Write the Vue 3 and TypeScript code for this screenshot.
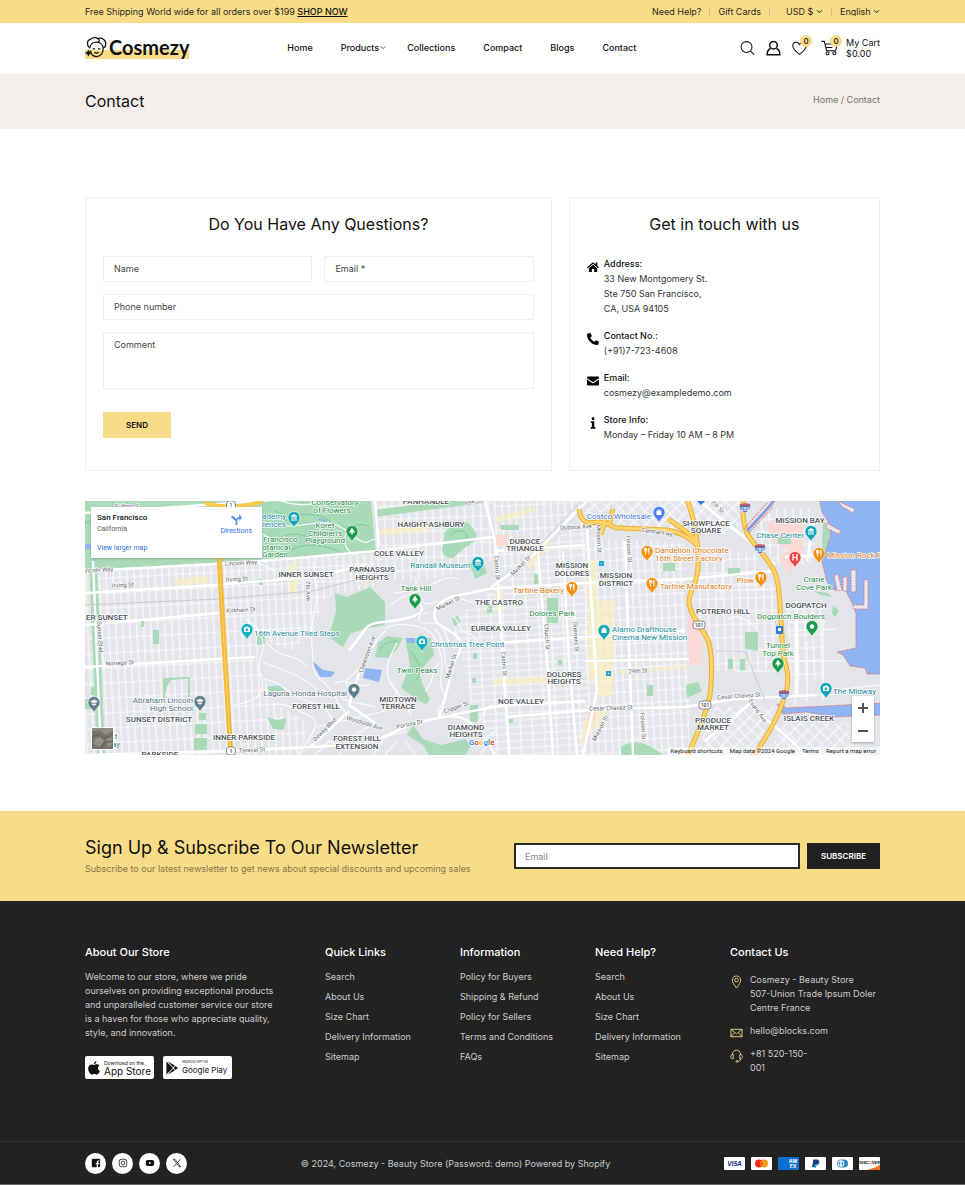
<script setup lang="ts">
import { ref } from 'vue'

interface MapLabel {
  t: string
  x: number
  y: number
  a?: 'start' | 'middle' | 'end'
  r?: number
}
interface MapPin {
  x: number
  y: number
  c: string
  g: 'camera' | 'tree' | 'food' | 'school' | 'bag' | 'h' | 'dot' | 'museum'
}

const navLinks = [
  { name: 'Home', menu: false },
  { name: 'Products', menu: true },
  { name: 'Collections', menu: false },
  { name: 'Compact', menu: false },
  { name: 'Blogs', menu: false },
  { name: 'Contact', menu: false },
]

const contactBlocks = [
  { icon: 'home', title: 'Address:', lines: ['33 New Montgomery St.', 'Ste 750 San Francisco,', 'CA, USA 94105'] },
  { icon: 'phone', title: 'Contact No.:', lines: ['(+91)7-723-4608'] },
  { icon: 'mail', title: 'Email:', lines: ['cosmezy@exampledemo.com'] },
  { icon: 'info', title: 'Store Info:', lines: ['Monday – Friday 10 AM – 8 PM'] },
]

const footerColumns = [
  { title: 'Quick Links', links: ['Search', 'About Us', 'Size Chart', 'Delivery Information', 'Sitemap'] },
  { title: 'Information', links: ['Policy for Buyers', 'Shipping & Refund', 'Policy for Sellers', 'Terms and Conditions', 'FAQs'] },
  { title: 'Need Help?', links: ['Search', 'About Us', 'Size Chart', 'Delivery Information', 'Sitemap'] },
]

const districts: MapLabel[] = [
  { t: 'INNER SUNSET', x: 221, y: 76 },
  { t: 'ER SUNSET', x: 1, y: 119, a: 'start' },
  { t: 'SUNSET DISTRICT', x: 74, y: 221 },
  { t: 'INNER PARKSIDE', x: 159, y: 239 },
  { t: 'PARKSIDE', x: 75, y: 256 },
  { t: 'FOREST HILL', x: 231, y: 208 },
  { t: 'PANHANDLE', x: 341, y: 3 },
  { t: 'HAIGHT-ASHBURY', x: 346, y: 26 },
  { t: 'COLE VALLEY', x: 314, y: 55 },
  { t: 'PARNASSUS', x: 287, y: 71 },
  { t: 'HEIGHTS', x: 287, y: 79 },
  { t: 'DUBOCE', x: 440, y: 43 },
  { t: 'TRIANGLE', x: 440, y: 50 },
  { t: 'MISSION', x: 487, y: 67 },
  { t: 'DOLORES', x: 487, y: 75 },
  { t: 'MISSION', x: 531, y: 77 },
  { t: 'DISTRICT', x: 531, y: 85 },
  { t: 'THE CASTRO', x: 414, y: 104 },
  { t: 'EUREKA VALLEY', x: 416, y: 130 },
  { t: 'DOLORES', x: 479, y: 176 },
  { t: 'HEIGHTS', x: 479, y: 183 },
  { t: 'NOE VALLEY', x: 436, y: 203 },
  { t: 'MIDTOWN', x: 313, y: 201 },
  { t: 'TERRACE', x: 313, y: 208 },
  { t: 'FOREST HILL', x: 272, y: 240 },
  { t: 'EXTENSION', x: 272, y: 248 },
  { t: 'DIAMOND', x: 381, y: 229 },
  { t: 'HEIGHTS', x: 381, y: 236 },
  { t: 'SHOWPLACE', x: 621, y: 25 },
  { t: 'SQUARE', x: 621, y: 32 },
  { t: 'MISSION BAY', x: 715, y: 22 },
  { t: 'POTRERO HILL', x: 638, y: 113 },
  { t: 'DOGPATCH', x: 721, y: 107 },
  { t: 'PRODUCE', x: 628, y: 222 },
  { t: 'MARKET', x: 628, y: 229 },
  { t: 'ISLAIS CREEK', x: 724, y: 220 },
]

const teal: MapLabel[] = [
  { t: 'ademy', x: 201, y: 18, a: 'end' },
  { t: 'ciences', x: 201, y: 26, a: 'end' },
  { t: '16th Avenue Tiled Steps', x: 169, y: 135, a: 'start' },
  { t: 'Randall Museum', x: 385, y: 67, a: 'end' },
  { t: 'Christmas Tree Point', x: 345, y: 146, a: 'start' },
  { t: 'Alamo Drafthouse', x: 527, y: 131, a: 'start' },
  { t: 'Cinema New Mission', x: 527, y: 139, a: 'start' },
  { t: 'Chase Center', x: 719, y: 37, a: 'end' },
  { t: 'The Midway', x: 748, y: 193, a: 'start' },
]
const green: MapLabel[] = [
  { t: 'Francisco', x: 178, y: 41, a: 'start' },
  { t: 'otanical', x: 177, y: 49, a: 'start' },
  { t: 'Garden', x: 177, y: 56, a: 'start' },
  { t: 'Conservatory', x: 250, y: 4 },
  { t: 'of Flowers', x: 247, y: 12 },
  { t: 'Koret', x: 240, y: 27 },
  { t: "Children's", x: 240, y: 35 },
  { t: 'Playground', x: 240, y: 42 },
  { t: 'Tank Hill', x: 331, y: 90 },
  { t: 'Dolores Park', x: 467, y: 115 },
  { t: 'Twin Peaks', x: 332, y: 172 },
  { t: 'Crane', x: 729, y: 81 },
  { t: 'Cove Park', x: 729, y: 89 },
  { t: 'Dogpatch Boulders', x: 706, y: 118 },
  { t: 'Tunnel', x: 693, y: 147 },
  { t: 'Top Park', x: 693, y: 155 },
  { t: 't', x: 31, y: 238 },
  { t: 'ay', x: 31, y: 246 },
]
const orange: MapLabel[] = [
  { t: 'Tartine Bakery', x: 479, y: 92, a: 'end' },
  { t: 'Dandelion Chocolate', x: 570, y: 52, a: 'start' },
  { t: '16th Street Factory', x: 570, y: 60, a: 'start' },
  { t: 'Tartine Manufactory', x: 575, y: 88, a: 'start' },
  { t: 'Plow', x: 669, y: 82, a: 'end' },
  { t: 'Mission Rock R', x: 742, y: 57, a: 'start' },
]
const slate: MapLabel[] = [
  { t: 'Abraham Lincoln', x: 108, y: 202, a: 'end' },
  { t: 'High School', x: 108, y: 210, a: 'end' },
  { t: 'Laguna Honda Hospital', x: 262, y: 195, a: 'end' },
]
const blue: MapLabel[] = [{ t: 'Costco Wholesale', x: 566, y: 18, a: 'end' }]

const placeGroups = [
  { kind: 'district', items: districts },
  { kind: 'teal', items: teal },
  { kind: 'green', items: green },
  { kind: 'orange', items: orange },
  { kind: 'slate', items: slate },
  { kind: 'blue', items: blue },
]

const streets: MapLabel[] = [
  { t: 'Fulton St', x: 42, y: 7, r: -3 },
  { t: 'Irving St', x: 38, y: 86, r: -3 },
  { t: 'Irving St', x: 152, y: 80, r: -3 },
  { t: 'Lincoln Way', x: 156, y: 64, r: -3 },
  { t: 'incoln Way', x: 14, y: 71, r: -3 },
  { t: 'Kirkham St', x: 156, y: 111, r: -3 },
  { t: 'Noriega St', x: 35, y: 164, r: -3 },
  { t: 'Taraval St', x: 167, y: 251, r: -3 },
  { t: 'Sunset Blvd', x: 13, y: 136, r: 87 },
  { t: '7th Ave', x: 221, y: 90, r: 87 },
  { t: 'Dewey Blvd', x: 241, y: 230, r: -45 },
  { t: 'Oak St', x: 388, y: 2, r: -6 },
  { t: 'Duboce Ave', x: 491, y: 28, r: -3 },
  { t: 'Mission St', x: 512, y: 38, r: 88 },
  { t: 'Castro St', x: 410, y: 67, r: 86 },
  { t: 'Castro St', x: 417, y: 163, r: 86 },
  { t: 'Market St', x: 437, y: 66, r: -45 },
  { t: 'Market St', x: 364, y: 104, r: -27 },
  { t: 'Market St', x: 368, y: 166, r: -72 },
  { t: 'Church St', x: 460, y: 136, r: 87 },
  { t: 'Guerrero St', x: 489, y: 136, r: 87 },
  { t: 'Clarendon Ave', x: 284, y: 154, r: -70 },
  { t: 'Portola Dr', x: 325, y: 225, r: -12 },
  { t: 'Clipper St', x: 372, y: 208, r: -20 },
  { t: 'Woodside Ave', x: 279, y: 224, r: 17 },
  { t: 'Mission St', x: 517, y: 228, r: -62 },
  { t: 'Cesar Chavez St', x: 526, y: 209, r: -2 },
  { t: 'Cesar Chavez St', x: 654, y: 197, r: -4 },
  { t: 'Central Fwy', x: 572, y: 33, r: 8 },
  { t: '24th St', x: 553, y: 172, r: -3 },
  { t: 'Folsom St', x: 542, y: 48, r: 87 },
  { t: 'Folsom St', x: 556, y: 225, r: 87 },
  { t: 'Evans Ave', x: 671, y: 211, r: 55 },
  { t: '7th St', x: 631, y: 7, r: 45 },
]

const pins: MapPin[] = [
  { x: 209, y: 27, c: '#12a5b8', g: 'museum' },
  { x: 267, y: 41, c: '#1e9a4b', g: 'tree' },
  { x: 162, y: 139, c: '#12b1c6', g: 'camera' },
  { x: 115, y: 211, c: '#5f7d8c', g: 'school' },
  { x: 9, y: 212, c: '#5f7d8c', g: 'school' },
  { x: 393, y: 72, c: '#12a5b8', g: 'museum' },
  { x: 330, y: 109, c: '#1e9a4b', g: 'tree' },
  { x: 487, y: 97, c: '#f29111', g: 'food' },
  { x: 337, y: 151, c: '#12b1c6', g: 'camera' },
  { x: 519, y: 140, c: '#12a5b8', g: 'bag' },
  { x: 269, y: 199, c: '#5f7d8c', g: 'dot' },
  { x: 574, y: 22, c: '#4a80f0', g: 'bag' },
  { x: 562, y: 61, c: '#f29111', g: 'food' },
  { x: 567, y: 93, c: '#f29111', g: 'food' },
  { x: 676, y: 87, c: '#f29111', g: 'food' },
  { x: 726, y: 41, c: '#12a5b8', g: 'museum' },
  { x: 710, y: 67, c: '#ea4444', g: 'h' },
  { x: 734, y: 63, c: '#f29111', g: 'food' },
  { x: 727, y: 136, c: '#1e9a4b', g: 'dot' },
  { x: 693, y: 173, c: '#1e9a4b', g: 'tree' },
  { x: 741, y: 198, c: '#12a5b8', g: 'camera' },
]

const interstates = [
  { x: 660, y: 7 },
  { x: 675, y: 48 },
  { x: 699, y: 194 },
]
const routes = [
  { x: 614, y: 124, n: '101', w: 12 },
  { x: 620, y: 204, n: '101', w: 12 },
  { x: 146, y: 4, n: '1', w: 9 },
  { x: 146, y: 250, n: '1', w: 9 },
]

const hwy101 = 'M602 -2C606 10 610 22 611 31S615 60 612 74S604 92 604 101C605 114 616 126 622 137S627 180 625 194S611 236 602 256'
const hwy280 = 'M658 -2C657 12 659 24 662 32S680 54 687 66S694 90 696 120S697 150 701 165C706 182 700 195 696 206S680 240 667 256'
const hwy1 = 'M134 52L138 127L146 256'
const central = 'M494 8C495 18 500 24 512 21C524 20 526 28 536 27L582 29C594 31 603 35 612 44M583 18C592 24 602 30 612 40M520 14C519 20 520 27 515 33M528 8L524 24'

const name = ref('')
const email = ref('')
const phone = ref('')
const comment = ref('')
const subscriber = ref('')
</script>

<template>
  <div class="page">
    <div class="topbar wrap">
      <p>Free Shipping World wide for all orders over $199 <a href="#shop" class="shop">SHOP NOW</a></p>
      <div class="toplinks">
        <a href="#help">Need Help?</a>
        <a href="#gift">Gift Cards</a>
        <span class="picker currency">
          <select aria-label="Currency"><option>USD $</option></select>
          <svg viewBox="0 0 8 6"><path d="M1 1.5L4 4.5L7 1.5" /></svg>
        </span>
        <span class="picker">
          <select aria-label="Language"><option>English</option></select>
          <svg viewBox="0 0 8 6"><path d="M1 1.5L4 4.5L7 1.5" /></svg>
        </span>
      </div>
    </div>

    <header class="header wrap">
      <a href="#home" class="logo">
        <svg viewBox="0 0 24 24">
          <path d="M4.500 12C1.500 9.500 2 4.500 5.500 3.500C7.500 1.500 11.500 1 13.500 2.500C18 1.500 22.500 4.500 21.500 9C21.500 10.500 20.500 12 19 12.500" />
          <path d="M5 13C5 9 8 6.500 12 6.500S19 9 19 13.500S16 21.500 12 21.500S6 18 5.500 15M13.500 2.500C15.500 4 15 6 13.500 6.800" />
          <path d="M8 13.500H10.500M13.500 13.500H16M9.800 17C11 18.300 13 18.300 14.200 17" />
          <path class="flower" d="M3.500 14.500C4.200 16.500 4.800 17 6.800 17.700C4.800 18.400 4.200 19 3.500 21C2.800 19 2.200 18.400 .4 17.700C2.200 17 2.800 16.500 3.500 14.500Z" />
        </svg>
        <span>Cosmezy</span>
      </a>
      <nav class="nav">
        <a v-for="l in navLinks" :key="l.name" :href="'#' + l.name.toLowerCase()" :class="{ menu: l.menu }">
          {{ l.name }}<svg v-if="l.menu" viewBox="0 0 8 6"><path d="M1 1.500L4 4.500L7 1.500" /></svg>
        </a>
      </nav>
      <div class="tools">
        <button type="button" aria-label="Search">
          <svg viewBox="0 0 16 16"><circle cx="7" cy="7" r="5.800" /><path d="M11.300 11.300L15 15" /></svg>
        </button>
        <a href="#account" aria-label="Account">
          <svg viewBox="0 0 16 16" class="bold"><circle cx="8" cy="5" r="4" /><path d="M4.800 8.500C2.500 9.500 1.200 11.500 1.200 15.200H14.800C14.800 11.500 13.500 9.500 11.200 8.500" /></svg>
        </a>
        <a href="#wishlist" class="counted" aria-label="Wishlist">
          <svg viewBox="0 0 16 16"><path d="M8 14.800C4 11.800 .8 9 .8 5.600C.8 1.600 6 .4 8 4.200C10 .4 15.200 1.600 15.200 5.600C15.200 9 12 11.800 8 14.800Z" /></svg>
          <span class="count">0</span>
        </a>
        <a href="#cart" class="counted cart">
          <svg viewBox="0 0 18 16"><path d="M.5 1H3.500L6 11H15.500L17.200 4M4.300 3.800H12M5.200 7.500H12" /><circle cx="7" cy="13.600" r="1.600" /><circle cx="14.200" cy="13.600" r="1.600" /></svg>
          <span class="count">0</span>
          <span class="total">My Cart<br />$0.00</span>
        </a>
      </div>
    </header>

    <section class="banner wrap">
      <h1>Contact</h1>
      <p><a href="#home">Home</a> / Contact</p>
    </section>

    <main class="wrap">
      <div class="cards">
        <form class="card" @submit.prevent>
          <h2>Do You Have Any Questions?</h2>
          <div class="fields">
            <input v-model="name" type="text" placeholder="Name" aria-label="Name" />
            <input v-model="email" type="email" placeholder="Email *" aria-label="Email" />
            <input v-model="phone" class="wide" type="tel" placeholder="Phone number" aria-label="Phone number" />
            <textarea v-model="comment" class="wide" placeholder="Comment" aria-label="Comment"></textarea>
          </div>
          <button type="submit" class="send">SEND</button>
        </form>

        <section class="card">
          <h2>Get in touch with us</h2>
          <div v-for="b in contactBlocks" :key="b.icon" class="info">
            <svg viewBox="0 0 16 16">
              <g v-if="b.icon === 'home'"><path d="M8 1.500L0 8.300L1.200 9.500L8 3.800L14.800 9.500L16 8.300L13.800 6.400V2H11.600V4.500Z" /><path d="M8 5L2.500 9.600V14.500H6.500V10.500H9.500V14.500H13.500V9.600Z" /></g>
              <path v-else-if="b.icon === 'phone'" d="M1 .8L4.700 0L6.500 4.200L4.300 6.100C5.200 8.500 7.500 10.800 9.900 11.700L11.800 9.500L16 11.300L15.200 15C15 15.700 14.700 16 14 16C6.500 16 0 9.500 0 2C0 1.300 .3 1 1 .8Z" />
              <g v-else-if="b.icon === 'mail'"><path d="M1.500 2H14.500C15.400 2 16 2.600 16 3.500V4.300L8 9.600L0 4.300V3.500C0 2.600 .6 2 1.500 2Z" /><path d="M0 5.900L8 11.200L16 5.900V12.500C16 13.400 15.400 14 14.500 14H1.500C.6 14 0 13.400 0 12.500Z" /></g>
              <g v-else><circle cx="8" cy="2.300" r="1.900" /><path d="M5 5.500H9.700V13.200H11.200V15.500H5V13.200H6.500V7.800H5Z" /></g>
            </svg>
            <p><strong>{{ b.title }}</strong><span v-for="line in b.lines" :key="line">{{ line }}</span></p>
          </div>
        </section>
      </div>

      <section class="map" aria-label="Map">
        <svg class="canvas" viewBox="0 0 795 254" preserveAspectRatio="xMidYMid slice">
          <defs>
            <pattern id="g-sunset" width="7" height="15" patternUnits="userSpaceOnUse" patternTransform="rotate(-3)"><path d="M3 0V15M0 3H7" /></pattern>
            <pattern id="g-noe" width="12" height="7" patternUnits="userSpaceOnUse" patternTransform="rotate(-3)"><path d="M3 0V7M0 3H12" /></pattern>
            <pattern id="g-mission" width="7" height="12" patternUnits="userSpaceOnUse" patternTransform="rotate(-3)"><path d="M3 0V12M0 3H7" /></pattern>
            <pattern id="g-potrero" width="8" height="13" patternUnits="userSpaceOnUse" patternTransform="rotate(-2)"><path d="M3 0V13M0 3H8" /></pattern>
            <pattern id="g-soma" width="10" height="8" patternUnits="userSpaceOnUse" patternTransform="rotate(45)"><path d="M3 0V8M0 3H10" /></pattern>
          </defs>
          <rect width="795" height="254" fill="#e3e5e9" />

          <g class="grids">
            <path fill="url(#g-sunset)" d="M0 66L290 52V86L240 96L228 130L205 150L182 140L172 160L188 200L225 225L215 254H0Z" />
            <path fill="url(#g-potrero)" d="M291 0H408V60L360 76L330 80L291 78Z" />
            <path fill="url(#g-mission)" d="M408 0H500L440 64L408 72Z" />
            <path fill="url(#g-noe)" d="M366 120L440 66L502 10V254H410L385 200L374 150Z" />
            <path fill="url(#g-mission)" d="M500 36L600 42V110L604 164V254H500Z" />
            <path fill="url(#g-soma)" d="M502 0H600L608 30L540 26L500 30ZM604 0H655V24L640 34L614 30Z" />
            <path fill="url(#g-potrero)" d="M614 46L670 52L690 90L694 150L680 170H630L618 124L606 104Z" />
            <path fill="url(#g-potrero)" d="M668 8H730V60L700 70L672 40ZM702 108H740V180H706Z" />
            <path fill="url(#g-soma)" d="M630 206L690 206L668 254H610ZM700 222L765 222V254H680Z" />
          </g>

          <g fill="#fbeebd" fill-opacity=".7">
            <path d="M90 78L124 75V82L90 85ZM204 62H212V94H204ZM296 28L345 24V30L296 34ZM410 16L450 6V10L410 22ZM502 60L511 58L514 180L504 180ZM511 100L530 98L528 194L513 196ZM408 178L478 175V181L408 184ZM535 170L602 164V167L535 173ZM440 60L464 38L468 42L444 68ZM498 220L516 206L522 212L496 244ZM410 86H418V110H410Z" />
          </g>
          <g fill="#fad9d6">
            <path d="M603 117L617 121V164H604ZM411 34H423V45H411ZM682 21H718V55L704 74L694 56L704 48L685 40ZM502 211H511V220H502Z" />
          </g>
          <g fill="#a9dbb8">
            <path d="M0 0H286L291 52L200 58L0 69Z" />
            <path d="M290 9L350 1L400 -4V2L350 8L290 16Z" />
            <path d="M360 31C366 24 376 18 383 22C390 28 394 36 390 40L378 48L368 57C360 58 355 52 358 44Z" />
            <path d="M250 92L262 96L285 86L300 101V124L278 128L265 133L258 146L244 136L251 110Z" />
            <path d="M320 137H346L349 154L334 171L337 182L345 198L341 203L333 199L316 187L325 164Z" />
            <path d="M290 156L293 142L302 135L318 137L312 148L303 157Z" />
            <path d="M328 224L338 238L356 244L380 238L386 244L380 254H344L338 244L322 234Z" />
            <path d="M462 97H473V122H462ZM385 204H393V221H385ZM449 73H453V83H449ZM402 104H407V112H402ZM367 117L373 115L375 121L369 126ZM384 62L398 60L402 72L390 78Z" />
            <path d="M660 131L673 131V150L660 148ZM578 62H590V70H578ZM643 67H655V75H643ZM562 184H568V195H562ZM601 184L613 181L617 190L602 197ZM693 36H706V43H693ZM748 104L754 110L750 116L747 112ZM536 246C548 238 560 240 578 254H536Z" />
            <path d="M738 20L745 26L743 50L737 56ZM728 90L742 92L748 96L736 94ZM415 24H434V29H416ZM643 158H648V168H643ZM655 158H660V170H655Z" />
            <path d="M109 237H122V249H109ZM114 212H121V219H114ZM110 223H122V233H110ZM68 129H74V143H68ZM182 216L192 219L202 217L198 229L188 228ZM6 186H12V194H6ZM0 198H6V208H0ZM172 135L180 133L180 143L172 144ZM174 78H178V84H174ZM56 120H59V126H56ZM182 186L196 184L201 192L186 194ZM388 152H392V158H388ZM387 177H391V182H387ZM424 218H428V222H424ZM473 159H477V164H473Z" />
            <path d="M78 177L105 176V196L103 196V178L86 179C82 184 80 190 80 197H78Z" />
          </g>
          <g fill="none" stroke="#7fc796" stroke-width="1">
            <path d="M0 22C20 14 40 16 60 12M190 10C210 20 225 6 245 20S270 18 285 26M205 50C220 40 240 44 258 52M365 35C372 26 384 30 382 38M326 150C332 160 340 168 330 180M295 152C296 142 304 140 312 140M196 36C210 30 225 34 230 44" />
          </g>
          <path d="M8 60L16 254" stroke="#a9dbb8" stroke-width="8" fill="none" />

          <g fill="#8fb4f3">
            <path d="M280 167L297 169L294 181L278 177ZM226 159L238 169L250 171L246 176L235 176ZM322 137H330V142H322ZM0 43H6V48H0ZM234 17L242 19V21L233 19Z" />
            <path class="shore" d="M734 -3L737 11L745 24V37L737 61L742 81L748 89L760 88L768 104L771 113V147L752 151L758 154L765 165L780 167L782 173L798 173V-3Z" />
            <path class="shore" d="M692 203L702 207L798 202V214L748 216L722 211L698 213Z" />
          </g>
          <g fill="#e6e8ec" class="shore">
            <path d="M749 75L753 73L757 89L752 90ZM758 76H762V90H758ZM766 69H771V91H766ZM779 79H783V108H768V104H779ZM742 22L756 30L754 33L741 27ZM752 0L770 8L768 12L758 6Z" />
          </g>

          <g class="minor">
            <path d="M170 60L200 75M228 60L232 96L226 130L228 160C226 180 246 180 252 200L262 214M160 118C170 124 176 130 178 142S170 160 176 176S172 200 150 204M182 142C196 160 210 150 222 166M178 162C196 168 212 172 232 188" />
            <path d="M178 178C200 182 206 196 222 200S240 206 250 222M188 204C200 200 214 210 226 216S222 240 214 254M250 182C262 176 270 188 284 184M252 190C260 206 276 200 290 206M232 226L300 210L312 192L304 180" />
            <path d="M300 130C288 140 284 156 276 166S258 176 262 186M312 142C304 156 298 170 306 182S320 200 326 214M300 128C312 120 330 124 340 128S352 142 356 154S352 180 358 190S350 206 354 214" />
            <path d="M344 112C330 112 330 124 344 122S360 130 364 142M350 128C362 140 358 160 364 176M322 100C338 96 340 108 352 100M306 104C312 96 330 92 342 86S362 74 374 78" />
            <path d="M330 76C336 86 320 92 308 92M340 190C350 182 346 168 354 162M368 116C376 120 372 130 382 132S392 146 404 146M374 96C384 104 396 98 404 108" />
            <path d="M288 254L300 236L322 230M300 254L312 240M254 254L262 238L284 226M330 254L320 240M230 254L244 240L262 250M392 222C400 216 398 206 408 204M396 254C404 246 396 236 412 230" />
            <path d="M20 30C60 24 90 40 120 30S170 28 190 40M190 24C215 30 240 12 262 30S280 40 290 38M262 30C256 42 262 50 270 54M196 0C214 6 226 4 240 0" />
            <path d="M642 120C650 110 664 120 672 128M632 90L690 88M640 46L636 100M650 170H690M702 130L752 128M710 108V204M722 140V200M738 120V200M702 160H760M740 190L795 184M700 196L770 192" />
          </g>
          <g class="major">
            <path d="M0 70L130 63L200 58L291 50L340 44L408 36M0 12L120 4L200 -2M8 60L16 254M0 92L130 84L228 76L280 64M0 124L134 112M0 166L134 158L170 156M0 254L140 250L225 246L282 243L330 222L358 216C370 214 380 216 388 224L402 240L410 254" />
            <path d="M502 0L440 62L404 88L366 96C350 102 346 112 352 122L368 132C380 140 376 150 370 160C364 176 362 196 354 216M225 246L264 210M290 0L294 46M282 126C288 120 300 122 318 118S344 108 330 100M264 150L282 126M274 172L264 204L290 222" />
            <path d="M400 0L410 40L416 130L424 254M452 40L462 160L468 254M478 50L484 160L492 254M502 26L512 190L498 254M540 40L548 254M420 216L520 208L600 206L650 198L730 194M366 214L420 204L500 200M411 50L500 44M404 88L500 82L600 78L690 70M408 142L500 136L600 130M500 160L604 158M655 0L660 30M614 0L664 40L690 64M700 56L735 54M664 200C676 218 700 230 720 254M620 240L668 200M728 20L722 60M712 100V196" />
          </g>
          <path d="M0 104L134 98L228 90L290 74M440 60L500 -4M630 150H660L680 200M690 120L700 150" fill="none" stroke="#c9ccd1" />
          <g fill="none">
            <path :d="hwy101 + hwy280 + central" stroke="#eeae34" stroke-width="5" />
            <path :d="hwy101 + hwy280 + central" stroke="#fdd468" stroke-width="3" />
            <path d="M120 2C140 8 160 6 178 0" stroke="#fbc94c" stroke-width="4" />
            <path :d="hwy1" stroke="#f5b93a" stroke-width="5" />
            <path :d="hwy1" stroke="#fdd468" stroke-width="1" />
            <path d="M662 30L684 6L690 -2" stroke="#8f9ad8" stroke-width="3" />
            <path d="M659 28L682 2M664 32L688 6" stroke="#d9636f" stroke-dasharray="2 1" />
          </g>

          <g class="street">
            <text v-for="(s, i) in streets" :key="i" :x="s.x" :y="s.y" :transform="`rotate(${s.r ?? 0} ${s.x} ${s.y})`">{{ s.t }}</text>
          </g>
          <g v-for="g in placeGroups" :key="g.kind" :class="['place', g.kind]">
            <text v-for="(p, i) in g.items" :key="i" :x="p.x" :y="p.y" :text-anchor="p.a ?? 'middle'">{{ p.t }}</text>
          </g>

          <g v-for="(p, i) in pins" :key="'p' + i" :transform="`translate(${p.x} ${p.y})`">
            <path d="M0 0C-1 -4 -6 -6 -6 -10.500A6 6 0 1 1 6 -10.500C6 -6 1 -4 0 0Z" :fill="p.c" stroke="#fff" stroke-width=".6" />
            <path v-if="p.g === 'tree'" d="M0 -14.500L3 -9.500H.7V-7.500H-.7V-9.500H-3Z" fill="#fff" />
            <path v-else-if="p.g === 'food'" d="M-2.500 -14V-11.500Q-2.500 -10.500 -1.500 -10.500V-7.500M-.5 -14V-11.500Q-.5 -10.500 -1.500 -10.500V-14M2 -7.500V-14Q.8 -12.500 1.200 -10.500H2" fill="none" stroke="#fff" stroke-width=".9" />
            <path v-else-if="p.g === 'camera'" fill-rule="evenodd" d="M-3 -12.500H-1.500L-1 -13.500H1L1.500 -12.500H3V-8H-3ZM0 -11.700A1.400 1.400 0 1 0 .01 -11.700Z" fill="#fff" />
            <path v-else-if="p.g === 'school'" d="M0 -13.500L4 -11.500L0 -9.500L-4 -11.500ZM-2.200 -9.800L0 -8.700L2.200 -9.800V-8.400L0 -7.300L-2.200 -8.400Z" fill="#fff" />
            <path v-else-if="p.g === 'bag'" d="M-2.500 -12.300H-1.200V-13.500H1.200V-12.300H2.500V-8H-2.500Z" fill="#fff" />
            <path v-else-if="p.g === 'museum'" d="M-3 -12L0 -14L3 -12V-11.300H-3ZM-2.500 -10.800H-1.300V-9H-2.500ZM-.6 -10.800H.6V-9H-.6ZM1.300 -10.800H2.500V-9H1.300ZM-3 -8.600H3V-7.600H-3Z" fill="#fff" />
            <path v-else-if="p.g === 'h'" d="M-2 -14V-7.500M2 -14V-7.500M-2 -10.700H2" stroke="#fff" stroke-width="1.300" />
            <circle v-else cx="0" cy="-10.500" r="2.200" fill="#fff" />
          </g>

          <g v-for="(s, i) in interstates" :key="'i' + i" :transform="`translate(${s.x} ${s.y})`">
            <path d="M-5 -4Q0 -5.500 5 -4Q7 2 0 5Q-7 2 -5 -4Z" fill="#4773c4" stroke="#fff" stroke-width=".6" />
            <path d="M-5 -4Q0 -5.500 5 -4L5.300 -2.500H-5.300Z" fill="#d5534f" />
            <text class="shield light" y="3">280</text>
          </g>
          <g v-for="(r, i) in routes" :key="'r' + i" :transform="`translate(${r.x} ${r.y})`">
            <rect :x="-r.w / 2" y="-4" :width="r.w" height="8" rx="3" fill="#fff" stroke="#6c6f74" stroke-width=".8" />
            <text class="shield" y="2">{{ r.n }}</text>
          </g>
          <g fill="#2f7de1">
            <rect x="691" y="125" width="7" height="8" rx="1" />
            <rect x="514" y="60" width="5" height="5" fill="#27a3d6" />
            <rect x="521" y="170" width="5" height="5" fill="#27a3d6" />
            <path d="M612 0H620L616 4Z" />
          </g>
          <g fill="#fff">
            <path d="M693 127H696V130H693ZM516 62H517V63H516ZM523 172H524V173H523Z" />
          </g>
          <text class="google" x="384" y="244"><tspan fill="#4285f4">G</tspan><tspan fill="#ea4335">o</tspan><tspan fill="#fbbc05">o</tspan><tspan fill="#4285f4">g</tspan><tspan fill="#34a853">l</tspan><tspan fill="#ea4335">e</tspan></text>
        </svg>

        <div class="place-card">
          <div>
            <strong>San Francisco</strong>
            <span>California</span>
            <a href="#larger">View larger map</a>
          </div>
          <a href="#directions" class="directions">
            <svg viewBox="0 0 12 12"><path d="M5 12V7.500L0 3.500L1.500 1.500L6 5.500C6.500 4 7.500 3.200 9 3V0L12 4L9 7.500V5C7.500 5.500 7 6.500 7 8V12Z" /></svg>
            Directions
          </a>
        </div>
        <button type="button" class="satellite" aria-label="Satellite view">
          <svg viewBox="0 0 22 22"><rect width="22" height="22" fill="#77746d" /><path d="M0 4L8 2L14 7L22 3V0H0ZM3 12L9 9L13 14L8 19L2 17ZM15 11L21 9V18L16 20Z" fill="#8f8d84" /><path d="M0 9L7 7L12 11L20 8M10 22L13 15L22 14" fill="none" stroke="#5c5a54" /><path d="M4 14C7 11 10 12 10 16" fill="none" stroke="#a5a39c" /></svg>
        </button>
        <div class="zoom">
          <button type="button" aria-label="Zoom in"><svg viewBox="0 0 10 10"><path d="M5 0V10M0 5H10" /></svg></button>
          <button type="button" aria-label="Zoom out"><svg viewBox="0 0 10 10"><path d="M0 5H10" /></svg></button>
        </div>
        <div class="legal">
          <button type="button">Keyboard shortcuts</button>
          <span>Map data ©2024 Google</span>
          <a href="#terms">Terms</a>
          <a href="#report">Report a map error</a>
        </div>
      </section>
    </main>

    <section class="newsletter wrap">
      <div>
        <h2>Sign Up &amp; Subscribe To Our Newsletter</h2>
        <p>Subscribe to our latest newsletter to get news about special discounts and upcoming sales</p>
      </div>
      <form @submit.prevent>
        <input v-model="subscriber" type="email" placeholder="Email" aria-label="Email" />
        <button type="submit">SUBSCRIBE</button>
      </form>
    </section>

    <footer class="footer">
      <div class="columns wrap">
        <section>
          <h3>About Our Store</h3>
          <p class="about">Welcome to our store, where we pride ourselves on providing exceptional products and unparalleled customer service our store is a haven for those who appreciate quality, style, and innovation.</p>
          <div class="stores">
            <a href="#appstore" class="apple">
              <svg viewBox="0 0 14 16"><path d="M9.800 0C9.900 1.800 8.500 3.500 6.900 3.500C6.700 1.800 8.300 .2 9.800 0ZM7.200 4.500C7.900 4.500 8.800 3.700 10.200 3.700C11.500 3.700 12.700 4.400 13.300 5.400C10.700 6.900 11.100 10.500 13.800 11.600C13.200 13.300 11.800 15.800 10.300 15.800C9.200 15.800 8.800 15.100 7.500 15.100C6.200 15.100 5.700 15.800 4.700 15.800C2.700 15.800 .2 12 .2 8.700C.2 5.500 2.200 3.800 4.200 3.800C5.500 3.800 6.500 4.500 7.200 4.500Z" /></svg>
              <span><small>Download on the</small>App Store</span>
            </a>
            <a href="#googleplay" class="play">
              <svg viewBox="0 0 14 16"><path d="M.5 .5L8 8L.5 15.500Z" /><path d="M2 .5L10.300 5.200L8.300 7.200Z" /><path d="M2 15.500L10.300 10.800L8.300 8.800Z" /><path d="M11 5.700L14 8L11 10.300L8.800 8Z" /></svg>
              <span><small>ANDROID APP ON</small>Google Play</span>
            </a>
          </div>
        </section>
        <section v-for="c in footerColumns" :key="c.title">
          <h3>{{ c.title }}</h3>
          <ul>
            <li v-for="l in c.links" :key="l"><a href="#link">{{ l }}</a></li>
          </ul>
        </section>
        <section>
          <h3>Contact Us</h3>
          <address>
            <svg viewBox="0 0 14 14"><path d="M7 13.500C4.500 10 2.500 7.500 2.500 5A4.500 4.500 0 0 1 11.500 5C11.500 7.500 9.500 10 7 13.500Z" /><circle cx="7" cy="5" r="2" /></svg>
            <span>Cosmezy - Beauty Store<br />507-Union Trade Ipsum Doler<br />Centre France</span>
            <svg viewBox="0 0 14 14"><path d="M1 3H13V11H1ZM1 3L7 8L13 3M1 11L5 6.500M13 11L9 6.500" /></svg>
            <a href="mailto:hello@blocks.com">hello@blocks.com</a>
            <svg viewBox="0 0 14 14"><path d="M2.500 5.500C2.500 -.8 11.500 -.8 11.500 5.500M2.500 5.500C.2 5.500 .2 10 2.500 10H3.500V5.500ZM11.500 5.500C13.800 5.500 13.800 10 11.500 10H10.500V5.500ZM11.500 10C11.500 12 10 12.800 8.500 12.800" /><circle cx="7.500" cy="12.800" r="1" /></svg>
            <a href="tel:+81520150001">+81 520-150-<br />001</a>
          </address>
        </section>
      </div>

      <div class="bottom wrap">
        <div class="social">
          <a href="#facebook" aria-label="Facebook"><svg viewBox="0 0 12 12"><path d="M2 1H10Q11 1 11 2V10Q11 11 10 11H8.500V7.500H10V6H8.500V5Q8.500 4.300 9.200 4.300H10V3H8.700Q6.900 3 6.900 4.800V6H5.700V7.500H6.900V11H2Q1 11 1 10V2Q1 1 2 1Z" /></svg></a>
          <a href="#instagram" aria-label="Instagram"><svg viewBox="0 0 12 12" class="line"><rect x="1.500" y="1.500" width="9" height="9" rx="2.500" /><circle cx="6" cy="6" r="2.200" /><path d="M8.600 3.100V3.600" /></svg></a>
          <a href="#youtube" aria-label="YouTube"><svg viewBox="0 0 12 12"><path fill-rule="evenodd" d="M3 2.500H9Q11 2.500 11 4.500V7.500Q11 9.500 9 9.500H3Q1 9.500 1 7.500V4.500Q1 2.500 3 2.500ZM5 4.500V7.500L7.600 6Z" /></svg></a>
          <a href="#x" aria-label="X"><svg viewBox="0 0 12 12" class="line"><path d="M1.500 1.500H3.500L10.500 10.500H8.500ZM10 1.500L6.700 5.300M5.300 6.800L2 10.500" /></svg></a>
        </div>
        <p>© 2024, Cosmezy - Beauty Store (Password: demo) Powered by Shopify</p>
        <div class="pay">
          <svg viewBox="0 0 21 13" role="img" aria-label="Visa"><rect width="21" height="13" rx="1" fill="#fff" /><text x="10.500" y="9" class="visa">VISA</text></svg>
          <svg viewBox="0 0 21 13" role="img" aria-label="Mastercard"><rect width="21" height="13" rx="1" fill="#fff" /><circle cx="8" cy="6.500" r="4" fill="#eb2a1b" /><circle cx="13" cy="6.500" r="4" fill="#f79e1b" /><path d="M10.500 3.400A4 4 0 0 1 10.500 9.600A4 4 0 0 1 10.500 3.400Z" fill="#ff6200" /></svg>
          <svg viewBox="0 0 21 13" role="img" aria-label="American Express"><rect width="21" height="13" rx="1" fill="#0a6fd0" /><text x="15" y="6" class="amex">AM</text><text x="15" y="11" class="amex">EX</text></svg>
          <svg viewBox="0 0 21 13" role="img" aria-label="PayPal"><rect width="21" height="13" rx="1" fill="#fff" /><path d="M8.300 2.500H12C14 2.500 14.500 4 14 5.500C13.500 7.200 12.500 7.700 10.500 7.700L10 10H7Z" fill="#253b80" /><path d="M14.300 4.500C15 6.800 13.500 8.500 11.300 8.500L10.800 10.800H8.800L9.500 7.700H11C13 7.500 14.200 6.500 14.300 4.500Z" fill="#179bd7" /></svg>
          <svg viewBox="0 0 21 13" role="img" aria-label="Diners Club"><rect width="21" height="13" rx="1" fill="#fff" /><path d="M10.500 2.500H12A4 4 0 0 1 12 10.500H10.500Z" fill="#3086c8" /><circle cx="9" cy="6.500" r="4" fill="#3086c8" /><circle cx="9" cy="6.500" r="3.200" fill="#fff" /><path d="M8.200 4.200A2.500 2.500 0 0 0 8.200 8.800ZM9.800 4.200A2.500 2.500 0 0 1 9.800 8.800Z" fill="#3086c8" /></svg>
          <svg viewBox="0 0 21 13" role="img" aria-label="Discover"><rect width="21" height="13" rx="1" fill="#fff" /><path d="M21 7.500V12Q21 13 20 13H7C13 12 18 10 21 7.500Z" fill="#ee7623" /><text x="10.500" y="7" class="disc">DISC<tspan fill="#ee7623">O</tspan>VER</text></svg>
        </div>
      </div>
    </footer>
  </div>
</template>

<style>
body {
  margin: 0;
}
</style>

<style scoped>
.page {
  font-family: Inter, 'Liberation Sans', sans-serif;
  font-size: 9px;
  color: #111;
  background: #fff;
}
.page * {
  box-sizing: border-box;
}
.wrap {
  padding-inline: 85px;
}
p,
h1,
h2,
h3,
ul {
  margin: 0;
  padding: 0;
  font-weight: 400;
}
ul {
  list-style: none;
}
a {
  color: inherit;
  text-decoration: none;
}
button,
input,
textarea,
select {
  font: inherit;
  color: inherit;
  border: 0;
  padding: 0;
  background: none;
}
button {
  cursor: pointer;
}
svg {
  display: block;
  flex: none;
}

/* Announcement bar */
.topbar {
  display: flex;
  align-items: center;
  justify-content: space-between;
  height: 23px;
  background: #f9dc88;
  color: #2b2719;
}
.shop {
  color: #111;
  font-weight: 500;
  text-decoration: underline;
}
.toplinks {
  display: flex;
  align-items: center;
}
.toplinks > * + * {
  margin-left: 8px;
  padding-left: 8px;
  border-left: 1px solid #d9c083;
  line-height: 9px;
}
.picker {
  display: flex;
  align-items: center;
  gap: 2px;
}
.toplinks > .currency {
  padding-left: 16px;
}
.picker select {
  appearance: none;
  line-height: 9px;
}
.picker svg,
.menu svg {
  width: 7px;
  height: 5px;
  fill: none;
  stroke: #222;
  stroke-width: 1.2;
}

/* Header */
.header {
  display: flex;
  align-items: center;
  justify-content: space-between;
  height: 51px;
  padding-bottom: 2px;
}
.logo {
  display: flex;
  align-items: center;
  gap: 1px;
  height: 22px;
  background: linear-gradient(#fff 13px, #f9dc88 13px);
  font: 700 20px/20px Lato, sans-serif;
}
.logo span {
  align-self: flex-start;
}
.logo svg {
  width: 23px;
  height: 23px;
  fill: none;
  stroke: #111;
  stroke-width: 1.3;
}
.logo .flower {
  fill: #111;
  stroke-width: .5;
}
.nav {
  display: flex;
  gap: 28px;
  margin-right: 6px;
  font-weight: 500;
}
.nav a {
  display: flex;
  align-items: center;
  gap: 1px;
}
.menu {
  margin-right: -7px;
}
.menu svg {
  width: 6px;
  stroke-width: 1;
}
.tools {
  display: flex;
  align-items: center;
  gap: 11px;
}
.tools svg {
  width: 15px;
  height: 16px;
  fill: none;
  stroke: #111;
  stroke-width: 1.1;
}
.tools svg.bold {
  stroke-width: 1.6;
}
.counted {
  position: relative;
}
.tools .cart {
  display: flex;
  align-items: center;
  gap: 8px;
  margin-left: 3px;
}
.tools .cart svg {
  width: 17px;
}
.count {
  position: absolute;
  top: -5px;
  left: 8px;
  width: 12px;
  height: 12px;
  border-radius: 50%;
  background: #f9dc88;
  font-size: 8px;
  font-weight: 500;
  line-height: 12px;
  text-align: center;
}
.cart .count {
  top: -2px;
  left: 9px;
}
.total {
  line-height: 11px;
}

/* Title banner */
.banner {
  display: flex;
  align-items: center;
  justify-content: space-between;
  height: 55px;
  padding-bottom: 2px;
  background: #f3eeea;
}
.banner h1 {
  font-size: 16px;
  line-height: 20px;
}
.banner p {
  padding-bottom: 3px;
  color: #77736f;
}

/* Cards */
.cards {
  display: grid;
  grid-template-columns: 3fr 2fr;
  gap: 17px;
  padding-top: 68px;
}
.card {
  border: 1px solid #efefef;
  padding: 16px 17px;
}
.card h2 {
  font-size: 16px;
  line-height: 20px;
  text-align: center;
}
.fields {
  display: grid;
  grid-template-columns: 1fr 1fr;
  gap: 12px;
  margin: 22px 0 23px;
}
.fields input,
.fields textarea {
  width: 100%;
  height: 26px;
  padding: 0 10px 2px;
  border: 1px solid #efefef;
}
.fields textarea {
  display: block;
  height: 57px;
  padding-top: 6px;
  resize: none;
}
.wide {
  grid-column: 1 / -1;
}
.fields ::placeholder {
  color: #444;
  opacity: 1;
}
.send {
  width: 68px;
  height: 26px;
  background: #f9dc88;
  font-size: 8px;
  font-weight: 600;
}
.info {
  display: flex;
  gap: 5px;
  margin-bottom: 12px;
  line-height: 15px;
  color: #333;
}
.card h2 + .info {
  margin-top: 22px;
}
.info svg {
  width: 12px;
  height: 12px;
  margin-top: 5px;
  fill: #000;
}
.info strong,
.info span {
  display: block;
}
.info strong {
  font-weight: 500;
  color: #111;
}

/* Map */
.map {
  position: relative;
  height: 254px;
  margin: 30px 0 56px;
  overflow: hidden;
  font-family: Roboto, sans-serif;
}
.canvas {
  width: 100%;
  height: 100%;
}
.canvas pattern path {
  fill: none;
  stroke: #fbfbfc;
  stroke-width: 1.2;
}
.minor {
  fill: none;
  stroke: #fafbfc;
  stroke-width: 1.2;
}
.major {
  fill: none;
  stroke: #fff;
  stroke-width: 2.4;
}
.shore {
  stroke: #e2747b;
  stroke-width: 1;
  stroke-dasharray: 1.5 1;
}
.canvas text {
  paint-order: stroke;
  stroke: #fff;
  stroke-width: 1.4;
  stroke-linejoin: round;
}
.street text {
  font-size: 6px;
  fill: #5f6368;
  text-anchor: middle;
}
.place {
  font-size: 8px;
}
.district {
  fill: #4b4f55;
  font-weight: 500;
}
.teal {
  fill: #148c9c;
}
.green {
  fill: #1b8a45;
}
.orange {
  fill: #e07a10;
}
.slate {
  fill: #557280;
}
.blue {
  fill: #3f73e0;
}
.canvas .shield {
  font-size: 5px;
  font-weight: 500;
  text-anchor: middle;
  fill: #3c4043;
  stroke: none;
}
.canvas .light {
  fill: #fff;
}
.google {
  font-size: 8px;
  font-weight: 700;
}
.place-card {
  position: absolute;
  top: 6px;
  left: 6px;
  display: flex;
  justify-content: space-between;
  width: 171px;
  height: 51px;
  padding: 5px 10px 4px 6px;
  background: #fff;
  box-shadow: 0 1px 2px #0003;
  color: #5b5b5b;
  font-size: 7px;
}
.place-card strong,
.place-card span {
  display: block;
}
.place-card strong {
  color: #111;
  font-size: 8px;
  font-weight: 500;
  line-height: 11px;
}
.place-card span {
  margin-bottom: 8px;
  line-height: 13px;
}
.place-card a {
  color: #2a73e8;
}
.directions {
  display: flex;
  flex-direction: column;
  align-items: center;
  gap: 2px;
  padding-top: 2px;
}
.directions svg {
  width: 11px;
  height: 11px;
  fill: #5a92f0;
}
.satellite {
  position: absolute;
  left: 6px;
  bottom: 5px;
  border: 1px solid #fff;
  border-radius: 2px;
  overflow: hidden;
}
.satellite svg {
  width: 21px;
  height: 21px;
}
.zoom {
  position: absolute;
  right: 6px;
  bottom: 13px;
  width: 22px;
  background: #fff;
  box-shadow: 0 1px 2px #0004;
}
.zoom button {
  display: grid;
  place-items: center;
  width: 22px;
  height: 23px;
}
.zoom svg {
  width: 10px;
  height: 10px;
  stroke: #555;
  stroke-width: 2;
}
.legal {
  position: absolute;
  right: 0;
  bottom: 0;
  display: flex;
  gap: 7px;
  padding: 0 4px;
  background: #ffffff80;
  color: #222;
  font-size: 6px;
  line-height: 8px;
}

/* Newsletter */
.newsletter {
  display: grid;
  grid-template-columns: 429fr 366fr;
  align-items: center;
  height: 90px;
  background: #f9dc88;
}
.newsletter h2 {
  font-size: 18px;
  line-height: 24px;
}
.newsletter p {
  color: #857546;
  line-height: 17px;
}
.newsletter form {
  display: flex;
  gap: 7px;
}
.newsletter input {
  flex: 1;
  min-width: 0;
  height: 26px;
  padding: 0 9px;
  border: 2px solid #2a2a2a;
  background: #fff;
}
.newsletter ::placeholder {
  color: #888;
}
.newsletter button {
  width: 73px;
  background: #212121;
  color: #fff;
  font-size: 8px;
  font-weight: 600;
}

/* Footer */
.footer {
  background: #222;
  color: #ccc;
  border-bottom: 1px solid #666;
}
.columns {
  display: grid;
  grid-template-columns: 240fr 135fr 135fr 135fr 150fr;
  padding-top: 43px;
  padding-bottom: 62px;
}
h3 {
  margin-bottom: 10px;
  color: #fff;
  font-size: 11px;
  font-weight: 500;
  line-height: 16px;
}
.about {
  max-width: 195px;
  line-height: 14px;
}
.stores {
  display: flex;
  gap: 9px;
  margin-top: 16px;
}
.stores a {
  display: flex;
  align-items: center;
  gap: 4px;
  width: 69px;
  height: 23px;
  padding: 0 3px;
  border-radius: 2px;
  background: #fff;
  color: #111;
  font-size: 10px;
  line-height: 10px;
  white-space: nowrap;
}
.stores svg {
  width: 12px;
  height: 14px;
  fill: #111;
}
.stores small {
  display: block;
  font-size: 5px;
  line-height: 6px;
}
.stores .play {
  font-size: 8px;
}
.play small {
  font-size: 3px;
  line-height: 5px;
}
li {
  line-height: 14px;
  margin-bottom: 6px;
}
address {
  display: grid;
  grid-template-columns: 14px 1fr;
  gap: 9px 6px;
  padding-top: 3px;
  font-style: normal;
  line-height: 14px;
  white-space: nowrap;
}
address svg {
  width: 13px;
  height: 14px;
  margin: 2px 0 -2px;
  fill: none;
  stroke: #ead07f;
}
.bottom {
  display: flex;
  align-items: center;
  justify-content: space-between;
  height: 43px;
  border-top: 1px solid #333;
}
.social {
  display: flex;
  gap: 6px;
}
.social a {
  display: grid;
  place-items: center;
  width: 21px;
  height: 21px;
  border-radius: 50%;
  background: #fff;
}
.social svg {
  width: 10px;
  height: 10px;
  fill: #111;
}
.social .line {
  fill: none;
  stroke: #222;
}
.pay {
  display: flex;
  gap: 6px;
}
.pay svg {
  width: 21px;
  height: 13px;
}
.pay text {
  text-anchor: middle;
  font-weight: 700;
}
.visa {
  font-size: 6px;
  font-style: italic;
  fill: #1a1f71;
}
.amex {
  font-size: 5px;
  fill: #fff;
}
.disc {
  font-size: 4px;
  fill: #222;
}
</style>
